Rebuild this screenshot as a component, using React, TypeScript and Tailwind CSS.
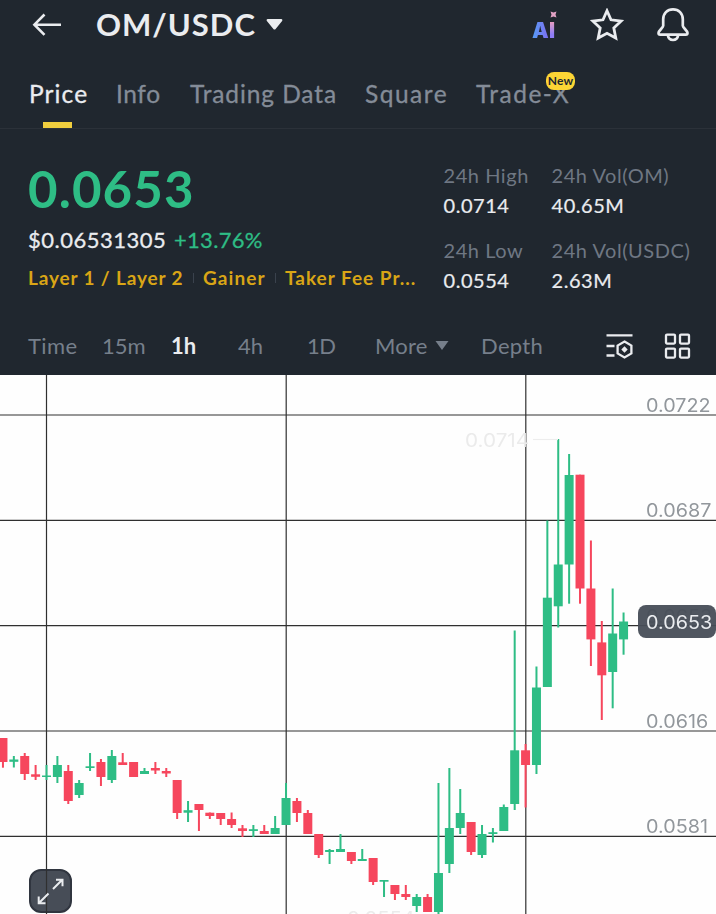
import { clsx } from 'clsx';

type Candle = [high: number, top: number, bottom: number, low: number, up: 0 | 1];

const CHART_TOP = 375;
const STEP = 10.888;

const candles: Candle[] = [
  [738, 738, 762, 767.7, 0],
  [756, 759.5, 761.8, 767.5, 1],
  [753, 756, 774, 780, 0],
  [765, 774.3, 776.8, 780, 0],
  [765, 775.5, 777, 780, 1],
  [756, 765, 777, 783, 1],
  [765, 771, 801, 804, 0],
  [780, 783, 795, 798, 1],
  [753, 766.3, 768, 771, 1],
  [759, 762, 777, 786, 0],
  [750, 756, 780, 783, 1],
  [753, 762.3, 765, 765, 0],
  [762, 762, 777, 777, 0],
  [768, 771, 774, 774, 1],
  [762, 768, 770.5, 774, 0],
  [768, 771, 773.5, 777, 0],
  [780, 780, 813, 819, 0],
  [801, 810.2, 812.7, 822, 1],
  [804, 804, 810, 831, 0],
  [812.5, 812.7, 816, 819, 0],
  [813, 813, 819, 825, 0],
  [812.5, 819, 825, 828, 0],
  [825, 828.3, 831, 837, 0],
  [825, 829.2, 831, 837, 1],
  [825, 831, 834, 834, 0],
  [816, 828, 834, 834, 1],
  [783, 798, 825, 825, 1],
  [798, 801, 813, 822, 0],
  [810, 813, 834, 834, 0],
  [834, 834, 855, 858, 0],
  [849, 850, 852, 864, 1],
  [834, 849, 852, 852, 1],
  [852, 852, 861, 864, 0],
  [849, 859, 861, 861, 1],
  [858, 858, 882, 885, 0],
  [880, 880, 881.7, 897, 1],
  [885, 885, 894, 900, 0],
  [885, 894, 897, 900, 0],
  [894, 897, 906, 912, 1],
  [894, 897, 912, 912, 0],
  [783, 873, 912, 914, 1],
  [768, 828, 864, 873, 1],
  [789, 813, 828, 834, 1],
  [822, 822, 852, 855, 0],
  [825, 834, 855, 858, 1],
  [828, 832.2, 834, 842.5, 1],
  [804.5, 807, 831, 831, 1],
  [630.5, 750.3, 804, 810, 1],
  [744, 750.3, 765, 807.5, 0],
  [666.5, 687.5, 765, 774, 1],
  [520.5, 597.7, 687, 687, 1],
  [439, 564.5, 606.3, 627.5, 1],
  [454, 475, 564.5, 603.7, 1],
  [474.7, 474.7, 588.5, 603.7, 0],
  [540.5, 588.5, 639.4, 666, 0],
  [621, 642.4, 675.3, 720, 0],
  [588.5, 633.5, 672, 708.3, 1],
  [612.5, 621.5, 639.4, 654.7, 1],
];

const axis = [
  { y: 415, label: '0.0722' },
  { y: 520.3, label: '0.0687' },
  { y: 625.7, label: '0.0653' },
  { y: 731, label: '0.0616' },
  { y: 836.3, label: '0.0581' },
];

const columns = [46.5, 286.2, 525.8];

const tabs = [
  { label: 'Price', spacing: 'tracking-[1.1px]', active: true },
  { label: 'Info', spacing: 'tracking-[0.6px]' },
  { label: 'Trading Data', spacing: 'tracking-[0.9px]' },
  { label: 'Square', spacing: 'tracking-[1.5px]' },
  { label: 'Trade-X', spacing: 'tracking-[1.5px]', badge: 'New' },
];

const stats = [
  { label: '24h High', value: '0.0714' },
  { label: '24h Vol(OM)', value: '40.65M' },
  { label: '24h Low', value: '0.0554' },
  { label: '24h Vol(USDC)', value: '2.63M' },
];

function Header() {
  return (
    <header className="flex h-[49px] items-center text-[#eaecef]">
      <svg className="ml-[32px] h-[24px] w-[30px]" viewBox="0 0 30 24" fill="none" stroke="currentColor" strokeWidth="2.6">
        <path d="M29 11.7H2.5M12.5 1.5L2.4 11.7l10.1 10.2" />
      </svg>
      <h1 className="ml-[34px] h-[49px] w-[160px] whitespace-nowrap text-[31px] leading-[48px] font-bold tracking-[1px]">OM/USDC</h1>
      <svg className="ml-[10px] h-[12px] w-[17px]" viewBox="0 0 17 12" fill="currentColor">
        <path d="M1.8 0h13.4c1.2 0 1.6 1.2.9 2L9.6 9.9c-.6.8-1.6.8-2.2 0L.9 2C.2 1.2.6 0 1.8 0z" />
      </svg>
      <div className="relative ml-[249px] flex h-[49px] w-[26px] font-['Inter',sans-serif] text-[21px] leading-[61px] font-black">
        <span className="w-[17px] bg-linear-to-r from-[#4f9cf5] to-[#7d6cf0] bg-clip-text text-transparent">A</span>
        <span className="bg-linear-to-b from-[#e79bc0] from-45% to-[#8e7cf5] to-70% bg-clip-text text-transparent">I</span>
        <svg className="absolute top-[11px] left-[18px] h-[7px] w-[7px]" viewBox="0 0 7 7" fill="#e3a3c6">
          <path d="M.5.5l3 1 3-1-1 3 1 3-3-1-3 1 1-3z" />
        </svg>
      </div>
      <svg className="ml-[32px] h-[34px] w-[34px]" viewBox="0 1 34 34" fill="none" stroke="currentColor" strokeWidth="2.8">
        <path d="M17 3.8l4 9 10.2 1.2-7.4 7 2 10.1L17 26.3 8.2 31.1l2-10.1-7.400-7L13 12.8z" />
      </svg>
      <svg className="ml-[32px] h-[36px] w-[34px]" viewBox="0 1 34 36" fill="none" stroke="currentColor" strokeWidth="2.7" strokeLinejoin="round">
        <path d="M17 3.3c-5.8 0-9.8 4.3-9.8 10v6.5c0 2-4.7 4.7-4.7 7.2 0 1.1.7 1.6 1.7 1.6h25.6c1 0 1.7-.5 1.7-1.6 0-2.5-4.7-5.2-4.7-7.2v-6.5c0-5.7-4-10-9.8-10z" />
        <path d="M11.8 29c.5 3.2 2.5 5 5.2 5s4.7-1.8 5.2-5" />
      </svg>
    </header>
  );
}

function Tabs() {
  return (
    <nav className="grid h-[80px] grid-cols-[87px_74px_175px_111px_100px] border-b border-[#2b3139] pl-[29px] text-[24.5px] leading-[89px] whitespace-nowrap text-[#848c98]">
      {tabs.map(tab => (
        <div
          key={tab.label}
          className={clsx('relative h-[79px] [-webkit-text-stroke:0.3px]', tab.spacing, tab.active && 'text-[#eaecef]')}
        >
          {tab.label}
          {tab.active && <span className="absolute bottom-0 left-[14px] h-[6px] w-[29px] bg-[#f0ce3e]" />}
          {tab.badge && (
            <span className="absolute top-[23px] left-[70px] flex h-[18px] w-[29px] items-center justify-center rounded-[8px] bg-[#fcd535] text-[12px] leading-none font-bold tracking-[0.1px] text-[#202630] [-webkit-text-stroke:0]">
              {tab.badge}
            </span>
          )}
        </div>
      ))}
    </nav>
  );
}

function Summary() {
  return (
    <section className="flex h-[188px] pl-[28px] whitespace-nowrap">
      <div className="w-[415.5px] pt-[30px]">
        <p className="text-[51px] leading-[60px] font-bold tracking-[1.1px] text-[#2ebd85]">0.0653</p>
        <div className="flex text-[22px] leading-[42px] tracking-[0.5px] text-[#eaecef] [-webkit-text-stroke:0.3px]">
          <span className="w-[146px]">$0.06531305</span>
          <span className="tracking-[0.3px] text-[#2ebd85]">+13.76%</span>
        </div>
        <div className="flex items-center text-[19px] leading-[34px] font-bold tracking-[0.85px] text-[#d9a516]">
          <span className="w-[165px]">Layer 1 / Layer 2</span>
          <span className="mr-[9px] h-[10px] w-px bg-[#3a424d]" />
          <span className="w-[72px] tracking-[1.1px]">Gainer</span>
          <span className="mr-[9px] h-[10px] w-px bg-[#3a424d]" />
          <span className="tracking-[1px]">Taker Fee Pr...</span>
        </div>
      </div>
      <dl className="grid h-[150px] grid-cols-[108px_150px] pt-[31px] text-[20px] leading-[30px] tracking-[0.55px]">
        {stats.map(stat => (
          <div key={stat.label} className="h-[75px]">
            <dt className="text-[#6f7783]">{stat.label}</dt>
            <dd className="text-[#eaecef] [-webkit-text-stroke:0.2px]">{stat.value}</dd>
          </div>
        ))}
      </dl>
    </section>
  );
}

function Timeframes() {
  return (
    <div className="flex h-[58px] pl-[28px] text-[22px] leading-[58px] whitespace-nowrap text-[#767f8b]">
      <span className="w-[74px] tracking-[0.4px]">Time</span>
      <span className="w-[69px]">15m</span>
      <span className="w-[67px] font-bold text-[#eaecef]">1h</span>
      <span className="w-[69px]">4h</span>
      <span className="w-[68px] tracking-[-0.5px]">1D</span>
      <span className="w-[60px] tracking-[0.2px]">More</span>
      <svg className="mt-[24px] mr-[32px] h-[9px] w-[14px]" viewBox="0 0 14 9" fill="currentColor">
        <path d="M.5 0h13L7 9z" />
      </svg>
      <span className="w-[125px] tracking-[0.3px]">Depth</span>
      <svg className="mt-[16px] h-[27px] w-[28px] text-[#eaecef]" viewBox="0 0 28 27" fill="none" stroke="currentColor" strokeWidth="2.3">
        <path d="M.5 2.4h26M.5 13h8M.5 22.500h8" />
        <path d="M18.500 8.600l6.900 4v7.800l-6.900 4-6.900-4v-7.800z" />
        <path d="M18.500 13.300l3.200 3.200-3.200 3.200-3.200-3.200z" fill="currentColor" stroke="none" />
      </svg>
      <svg className="mt-[16px] ml-[30px] h-[27px] w-[28px] text-[#eaecef]" viewBox="0 0 28 27" fill="none" stroke="currentColor" strokeWidth="2.3">
        <rect x="2" y="1.6" width="9" height="9" rx="1" />
        <rect x="16" y="1.6" width="9" height="9" rx="1" />
        <rect x="2" y="15.6" width="9" height="9" rx="1" />
        <rect x="16" y="15.6" width="9" height="9" rx="1" />
      </svg>
    </div>
  );
}

function Chart() {
  return (
    <div className="relative h-[539px] overflow-hidden bg-[#fefefe] font-['Inter',sans-serif]">
      {/* Expand button, the grid runs across it */}
      <div className="absolute top-[494px] left-[29px] h-[44px] w-[43px] rounded-[12px] border-2 border-[#30353f] bg-[#474d57]" />
      <svg className="absolute inset-0" width="716" height="539" viewBox={`0 ${CHART_TOP} 716 539`}>
        <g stroke="#303030" strokeWidth="1.2">
          {axis.map(a => <path key={a.y} d={`M0 ${a.y}H716`} />)}
          {columns.map(x => <path key={x} d={`M${x} ${CHART_TOP}V914`} />)}
        </g>
        {candles.map(([high, top, bottom, low, up], i) => {
          const x = 2.95 + i * STEP;
          return (
            <g key={i} fill={up ? '#2ebd85' : '#f6465d'}>
              <rect x={x - 1} y={high} width="2" height={low - high} />
              <rect x={x - 4.5} y={top} width="9" height={bottom - top} />
            </g>
          );
        })}
        <path d="M533 439.5h25" stroke="#ededed" strokeWidth="1.2" />
        <g stroke="#eaecef" strokeWidth="2" fill="none">
          <path d="M53 889l9.5-9.5M56 879.7h6.5v6.5M48.5 893.5l-9.8 9.8M38.7 896.5v6.8h6.8" />
        </g>
      </svg>
      <span className="absolute top-[56px] left-[465px] origin-left scale-x-115 text-[18px] leading-[20px] text-[#ebebeb]">0.0714</span>
      <span className="absolute top-[534px] left-[347px] origin-left scale-x-112 text-[18px] leading-[20px] text-[#ebebeb]">0.0554</span>
      {axis.map(a => (
        <span
          key={a.label}
          className="absolute left-[645.5px] origin-left scale-x-110 text-[18px] leading-[20px] text-[#92979c]"
          style={{ top: a.y - CHART_TOP - 19 }}
        >
          {a.label}
        </span>
      ))}
      <div className="absolute top-[230px] right-0 h-[33px] w-[78px] rounded-[8px] bg-[#474d57]/95 pl-[7.5px] text-[18px] leading-[35px] text-[#eaecef]">
        <span className="inline-block origin-left scale-x-110">0.0653</span>
      </div>
    </div>
  );
}

export default function App() {
  return (
    <main className="h-[914px] w-[716px] overflow-hidden bg-[#20272f] font-['Lato','Liberation_Sans',sans-serif]">
      <Header />
      <Tabs />
      <Summary />
      <Timeframes />
      <Chart />
    </main>
  );
}
